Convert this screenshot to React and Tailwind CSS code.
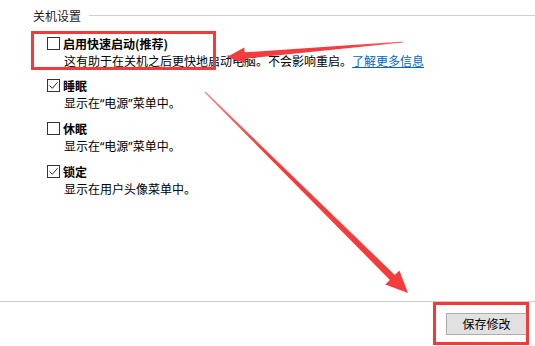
import React from "react";

function arrowPoints(tx, ty, px, py, headLen, headHalf, shaftHalf, tailHalf) {
  const dx = px - tx, dy = py - ty;
  const len = Math.hypot(dx, dy);
  const ux = dx / len, uy = dy / len;
  const nx = -uy, ny = ux;
  const bx = px - ux * headLen, by = py - uy * headLen;
  const pts = [
    [tx + nx * tailHalf, ty + ny * tailHalf],
    [bx + nx * shaftHalf, by + ny * shaftHalf],
    [bx + nx * headHalf, by + ny * headHalf],
    [px, py],
    [bx - nx * headHalf, by - ny * headHalf],
    [bx - nx * shaftHalf, by - ny * shaftHalf],
    [tx - nx * tailHalf, ty - ny * tailHalf],
  ];
  return pts.map((p) => p[0].toFixed(1) + "," + p[1].toFixed(1)).join(" ");
}

function Check({ checked }) {
  return (
    <span className="relative inline-block w-[13px] h-[13px] border border-[#333333] bg-white shrink-0 mr-[3px]">
      {checked && (
        <svg className="absolute inset-0" width="11" height="11" viewBox="0 0 11 11">
          <path d="M1.5 5.5 L4.3 8.3 L9.5 2.3" fill="none" stroke="#333333" strokeWidth="1" />
        </svg>
      )}
    </span>
  );
}

function Row({ checked, label, children }) {
  return (
    <div className="flex flex-col">
      <div className="flex items-center h-[17px]">
        <Check checked={checked} />
        <span className="font-bold leading-[17px]">{label}</span>
      </div>
      <div className="pl-[17px] leading-[17px]">{children}</div>
    </div>
  );
}

function Q({ children }) {
  return <span style={{ fontFamily: '"Noto Sans", sans-serif' }}>{children}</span>;
}

export default function App() {
  const font = { fontFamily: '"Noto Sans CJK SC", "Noto Sans", sans-serif' };
  return (
    <div
      className="relative w-[535px] h-[346px] bg-white text-black text-[12px] flex flex-col overflow-hidden"
      style={font}
    >
      <div className="flex-1 flex flex-col pl-[33px]">
        <div className="flex items-center h-[17px] mt-[7px]">
          <span className="leading-[17px] text-[#1a1a1a]">关机设置</span>
          <div className="flex-1 h-px bg-[#d0d0d0] ml-[8px]" />
        </div>
        <div className="flex flex-col gap-[8px] pl-[14px] mt-[11px]">
          <Row checked={false} label="启用快速启动(推荐)">
            这有助于在关机之后更快地启动电脑。不会影响重启。
            <span className="text-[#0066cc] underline">了解更多信息</span>
          </Row>
          <Row checked={true} label="睡眠">
            显示在<Q>“</Q>电源<Q>”</Q>菜单中。
          </Row>
          <Row checked={false} label="休眠">
            显示在<Q>“</Q>电源<Q>”</Q>菜单中。
          </Row>
          <Row checked={true} label="锁定">显示在用户头像菜单中。</Row>
        </div>
      </div>
      <div className="h-[45px] border-t border-[#cccccc] flex justify-end items-start pt-[11px] pr-[8px]">
        <button className="w-[81px] h-[22px] bg-[#e1e1e1] border border-[#adadad] text-[12px] leading-none text-black" style={font}>
          保存修改
        </button>
      </div>

      <div className="absolute left-[31px] top-[31px] w-[185px] h-[39px] border-[3px] border-[#f23a3a] pointer-events-none" />
      <div className="absolute left-[433px] top-[302px] w-[96px] h-[43px] border-[3px] border-[#f23a3a] pointer-events-none" />

      <svg className="absolute inset-0 pointer-events-none" width="535" height="346">
        <defs>
          <linearGradient id="g1" x1="403" y1="42" x2="227" y2="57" gradientUnits="userSpaceOnUse">
            <stop offset="0" stopColor="#f56a6a" />
            <stop offset="0.3" stopColor="#f43c3c" />
            <stop offset="1" stopColor="#f43c3c" />
          </linearGradient>
          <linearGradient id="g2" x1="205" y1="92" x2="408" y2="293" gradientUnits="userSpaceOnUse">
            <stop offset="0" stopColor="#f58080" />
            <stop offset="0.3" stopColor="#f43c3c" />
            <stop offset="1" stopColor="#f43c3c" />
          </linearGradient>
        </defs>
        <polygon points={arrowPoints(403, 42, 227, 57, 18, 8, 3.2, 0.5)} fill="url(#g1)" />
        <polygon points={arrowPoints(205, 92, 408, 293, 22, 10, 3.5, 0.5)} fill="url(#g2)" />
      </svg>
    </div>
  );
}
